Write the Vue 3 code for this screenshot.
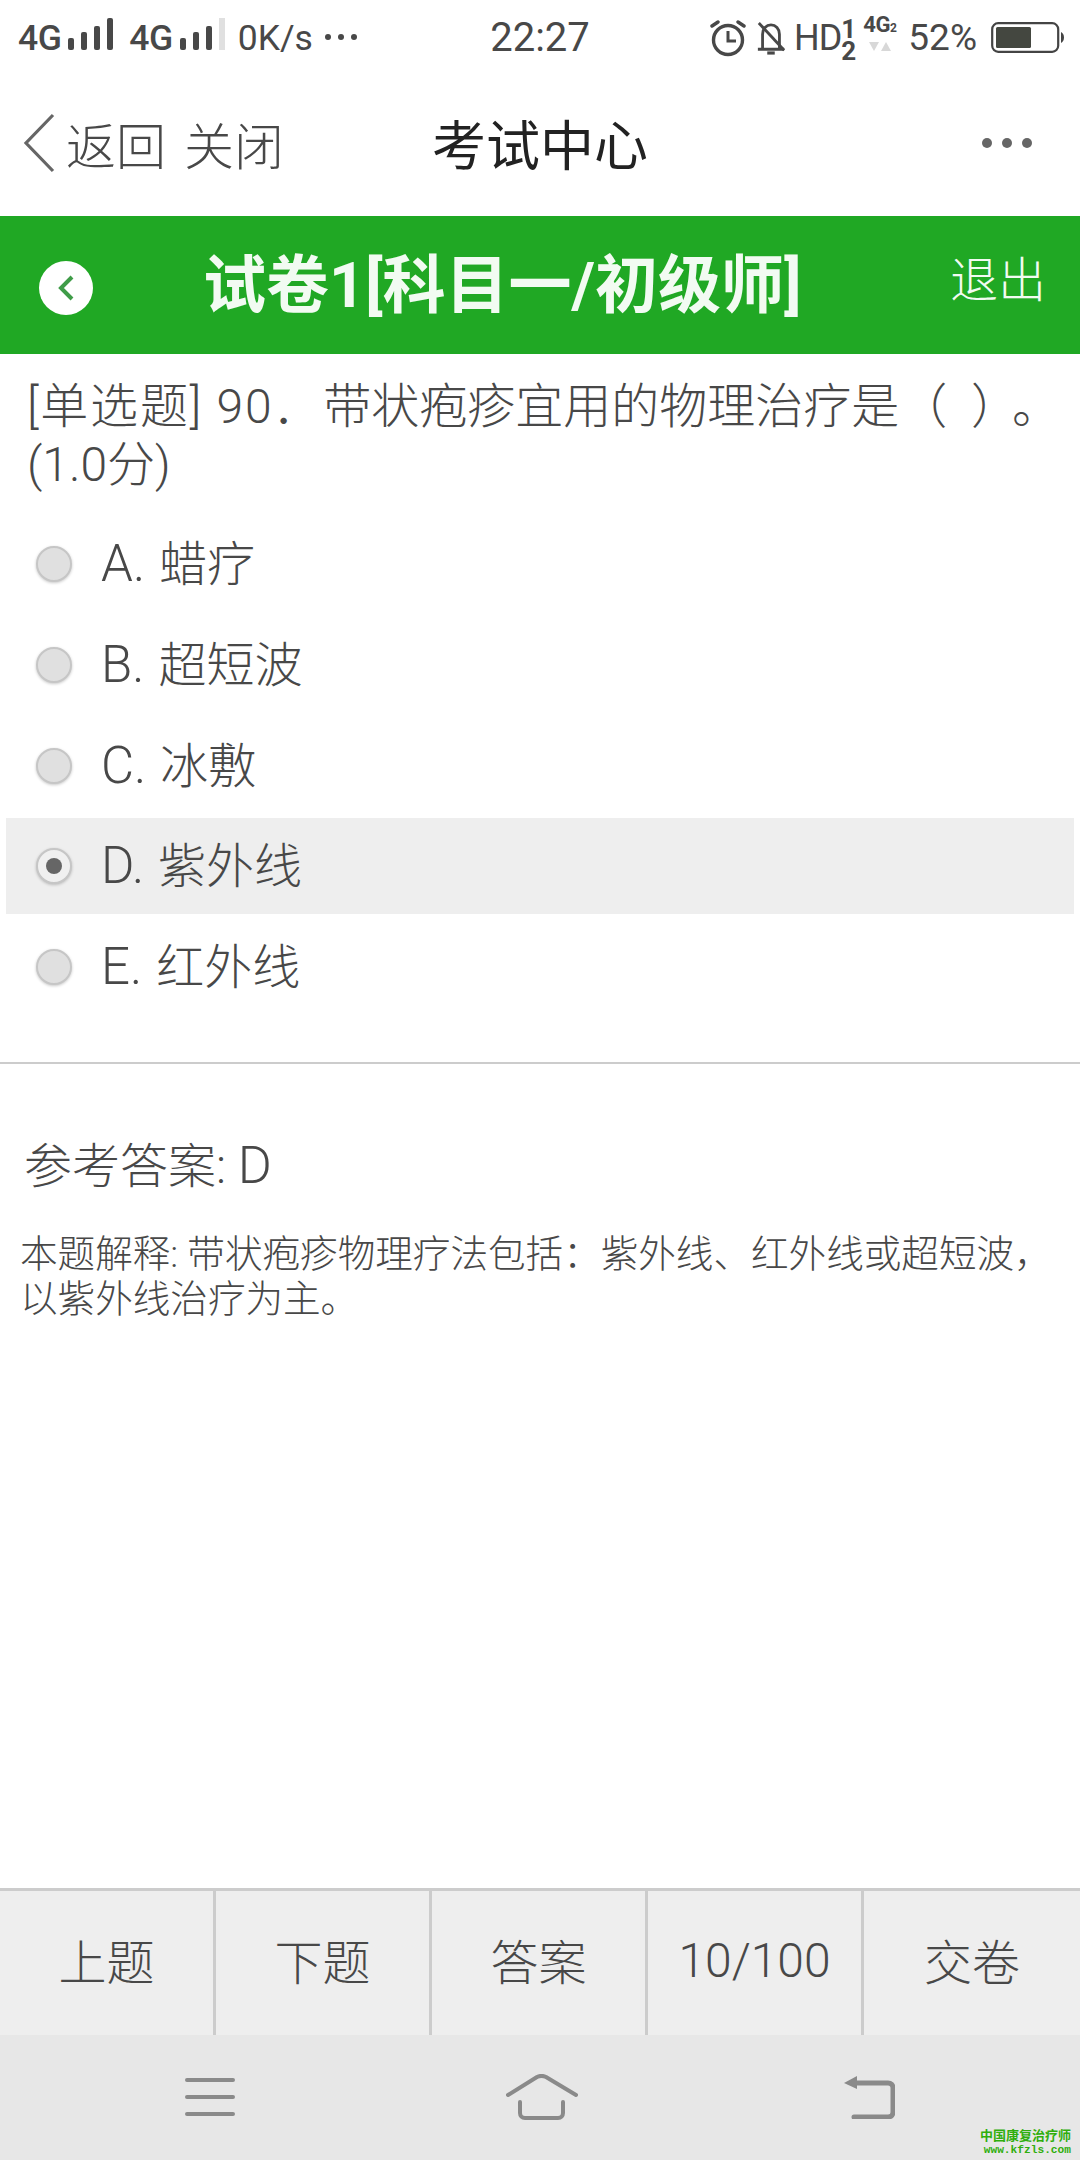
<script setup>
const options = [
  { key: 'A.', text: '蜡疗', selected: false },
  { key: 'B.', text: '超短波', selected: false },
  { key: 'C.', text: '冰敷', selected: false },
  { key: 'D.', text: '紫外线', selected: true },
  { key: 'E.', text: '红外线', selected: false }
]
const tabs = ['上题', '下题', '答案', '10/100', '交卷']
</script>

<template>
  <div class="page">
    <div class="status">
      <div class="st-left">
        <span class="net">4G</span>
        <svg class="sig" width="50" height="34" viewBox="0 0 50 34" fill="#484848">
          <rect x="2" y="21" width="6" height="12" rx="2"/><rect x="15" y="15" width="6" height="18" rx="2"/><rect x="28" y="9" width="6" height="24" rx="2"/><rect x="41" y="1" width="6" height="32" rx="2"/>
        </svg>
        <span class="net net2">4G</span>
        <svg class="sig" width="50" height="34" viewBox="0 0 50 34" fill="#484848">
          <rect x="2" y="21" width="6" height="12" rx="2"/><rect x="15" y="15" width="6" height="18" rx="2"/><rect x="28" y="9" width="6" height="24" rx="2"/><rect x="41" y="1" width="6" height="32" fill="#e0e0e0"/>
        </svg>
        <span class="speed">0K/s</span>
        <span class="dots3"><i></i><i></i><i></i></span>
      </div>
      <div class="st-time">22:27</div>
      <div class="st-right">
        <svg width="36" height="38" viewBox="0 0 36 38" fill="none" stroke="#484848" stroke-width="3.4">
          <circle cx="18" cy="21" r="14.5"/><path d="M18 12v10h8" stroke-width="3"/><path d="M2 7l6-4M34 7l-6-4" stroke-linecap="round"/>
        </svg>
        <svg class="bell" width="30" height="38" viewBox="0 0 32 38" fill="none" stroke="#484848" stroke-width="3">
          <path d="M7 30V15c0-6 4-10 9-10s9 4 9 10v15M2 31h28"/><path d="M12 35h8" stroke-width="3.4"/><path d="M3 3l27 29"/>
        </svg>
        <span class="hd">HD</span>
        <span class="hd-sub"><b>1</b><b>2</b></span>
        <span class="g4">
          <span class="g4-t">4G<small>2</small></span>
          <span class="tri"><i class="down"></i><i class="up"></i></span>
        </span>
        <span class="pct">52%</span>
        <svg class="batt" width="74" height="32" viewBox="0 0 74 32">
          <rect x="1.200" y="1.200" width="66" height="28.600" rx="6" fill="none" stroke="#444" stroke-width="2.200"/>
          <rect x="5" y="5" width="35" height="21" rx="1.500" fill="#444740"/>
          <path d="M70 10c2 1 3 3 3 5.500s-1 4.500-3 5.500z" fill="#444"/>
        </svg>
      </div>
    </div>

    <div class="nav">
      <div class="nav-left">
        <svg width="34" height="60" viewBox="0 0 34 60" fill="none" stroke="#666" stroke-width="3.2">
          <path d="M31 2L4 30l27 28"/>
        </svg>
        <span>返回</span>
        <span class="nav-close">关闭</span>
      </div>
      <div class="nav-title">考试中心</div>
      <div class="nav-more"><i></i><i></i><i></i></div>
    </div>

    <div class="head">
      <div class="back-btn">
        <svg width="20" height="28" viewBox="0 0 20 28" fill="none" stroke="#3f9c48" stroke-width="4">
          <path d="M16 3L5 14l11 11"/>
        </svg>
      </div>
      <div class="head-title">试卷1[科目一/初级师]</div>
      <div class="head-exit">退出</div>
    </div>

    <div class="main">
      <div class="question">
        <div class="q-line"><span class="q-tag">[单选题] 90．</span>带状疱疹宜用的物理治疗是<span class="q-paren">（ ）</span><span class="q-end">。</span></div>
        <div class="q-line">(1.0分)</div>
      </div>
      <div class="options">
        <div v-for="o in options" :key="o.key" class="opt" :class="{ on: o.selected }">
          <span class="radio"><i v-if="o.selected"></i></span>
          <span class="opt-label"><span class="opt-key">{{ o.key }}</span>{{ o.text }}</span>
        </div>
      </div>
      <div class="rule"></div>
      <div class="answer">参考答案: <span class="answer-key">D</span></div>
      <div class="explain">本题解释: 带状疱疹物理疗法包括：紫外线、红外线或超短波，以紫外线治疗为主。</div>
    </div>

    <div class="tabs">
      <div v-for="t in tabs" :key="t" class="tab" :class="{ num: t.includes('/') }">{{ t }}</div>
    </div>

    <div class="sys">
      <svg width="50" height="40" viewBox="0 0 50 40" stroke="#8a8a8a" stroke-width="4" stroke-linecap="round">
        <path d="M2 3h46M2 20h46M2 37h46"/>
      </svg>
      <svg class="sys-home" width="72" height="46" viewBox="0 0 72 46" fill="none" stroke="#8a8a8a" stroke-width="4" stroke-linecap="round" stroke-linejoin="round">
        <path d="M2 21L31 3c3-1.500 6-1.500 9 0l30 18"/>
        <path d="M14 28v11c0 3 2 5 5 5h33c3 0 5-2 5-5V28"/>
      </svg>
      <svg width="52" height="44" viewBox="0 0 52 44" fill="none">
        <path d="M1 8L14 1v13z" fill="#8a8a8a"/>
        <path d="M10 8h35c3 0 5 2 5 5v24c0 3-2 5-5 5H11" stroke="#8a8a8a" stroke-width="5" stroke-linecap="round"/>
      </svg>
    </div>

    <div class="mark">
      <div>中国康复治疗师</div>
      <div class="mark-url">www.kfzls.com</div>
    </div>
  </div>
</template>

<style>
html, body { margin: 0; background: #fff; }
</style>

<style scoped>
.page {
  position: relative;
  width: 1080px;
  height: 2160px;
  display: flex;
  flex-direction: column;
  overflow: hidden;
  background: #fff;
  color: #484848;
  font-family: Roboto, "Noto Sans CJK SC", sans-serif;
}
.status {
  height: 72px;
  display: grid;
  grid-template-columns: 1fr auto 1fr;
  align-items: center;
  padding-top: 3px;
  box-sizing: border-box;
}
.st-left { display: flex; align-items: center; padding-left: 18px; }
.net { font-size: 35.500px; font-weight: 500; letter-spacing: -0.5px; }
.net2 { margin-left: 13px; }
.sig { margin-left: 5px; margin-top: -8px; }
.speed { font-size: 35.500px; margin-left: 10px; }
.dots3 { display: flex; gap: 7px; margin-left: 12px; margin-top: -2px; }
.dots3 i { width: 6px; height: 6px; border-radius: 50%; background: #484848; }
.st-time { font-size: 40px; text-align: center; }
.st-right { display: flex; align-items: center; justify-content: flex-end; padding-right: 15px; }
.bell { margin-left: 10px; }
.hd { font-size: 36px; margin-left: 8px; letter-spacing: -1px; }
.hd-sub { display: flex; flex-direction: column; font-size: 26px; line-height: 22px; margin-top: 5px; }
.hd-sub b { font-weight: 700; display: block; }
.g4 { display: flex; flex-direction: column; align-items: center; margin-left: 7px; margin-top: -10px; }
.g4-t { font-size: 22px; font-weight: 700; line-height: 22px; letter-spacing: -0.5px; }
.g4-t small { font-size: 12px; }
.tri { display: flex; gap: 2px; margin-top: 3px; }
.tri i { width: 0; height: 0; border-left: 5px solid transparent; border-right: 5px solid transparent; }
.tri .down { border-top: 9px solid #d8d8d8; }
.tri .up { border-bottom: 9px solid #d8d8d8; }
.pct { font-size: 37px; margin-left: 12px; margin-right: 14px; }

.nav {
  height: 144px;
  display: grid;
  grid-template-columns: 1fr auto 1fr;
  align-items: center;
  padding-bottom: 3px;
  box-sizing: border-box;
}
.nav-left { display: flex; align-items: center; padding-left: 22px; gap: 10px; font-size: 50px; font-weight: 300; color: #484848; }
.nav-close { margin-left: 8px; }
.nav-title { font-size: 54px; font-weight: 400; color: #222; }
.nav-more { display: flex; justify-content: flex-end; gap: 10px; padding-right: 48px; }
.nav-more i { width: 10px; height: 10px; border-radius: 50%; background: #666; }

.head {
  height: 138px;
  background: #20a824;
  display: flex;
  align-items: center;
  color: #f2fbf2;
}
.back-btn {
  width: 54px;
  height: 54px;
  margin-left: 39px;
  margin-top: 6px;
  border-radius: 50%;
  background: #fff;
  display: flex;
  align-items: center;
  justify-content: center;
}
.head-title { margin-left: 110px; font-size: 63px; font-weight: 700; margin-top: -12px; white-space: nowrap; }
.head-exit { margin-left: auto; margin-right: 34px; font-size: 48px; font-weight: 300; margin-top: -19px; }

.main { flex: 1; min-height: 0; }
.question {
  padding: 24px 0 0 27px;
  font-size: 48px;
  line-height: 58px;
  font-weight: 300;
  color: #484848;
}
.q-line { white-space: nowrap; }
.q-tag { letter-spacing: 1.800px; }
.q-paren { letter-spacing: 6px; }
.q-end { margin-left: 11px; }
.options { margin-top: 19px; padding: 0 6px; }
.opt {
  height: 101px;
  display: flex;
  align-items: center;
  font-size: 48px;
  font-weight: 300;
  padding-left: 30px;
}
.opt.on { background: #eee; height: 96px; margin: 2px 0 2px; }
.opt-label { margin-top: -8px; }
.opt-key { font-size: 51px; margin-right: 14px; }
.radio {
  width: 36px;
  height: 36px;
  border-radius: 50%;
  background: #e0e0e0;
  border: 2px solid #c6c6c6;
  box-sizing: border-box;
  box-shadow: 0 1px 3px rgba(0,0,0,.22);
  margin-right: 29px;
  display: flex;
  align-items: center;
  justify-content: center;
}
.radio i { width: 16px; height: 16px; border-radius: 50%; background: #666; }
.on .radio { background: #f0f0f0; }
.rule { height: 2px; background: #ccc; margin-top: 45px; }
.answer { padding: 72px 0 0 24px; font-size: 48px; line-height: 60px; font-weight: 300; }
.answer-key { font-size: 52px; }
.explain { padding: 35px 20px 0 20px; font-size: 37.600px; line-height: 45px; font-weight: 300; }

.tabs {
  height: 144px;
  display: grid;
  grid-template-columns: repeat(5, 1fr);
  background: #eee;
  border-top: 3px solid #ccc;
}
.tab {
  display: flex;
  align-items: center;
  justify-content: center;
  font-size: 48px;
  font-weight: 300;
  border-right: 3px solid #ccc;
  padding-bottom: 9px;
}
.tab.num { padding-bottom: 5px; }
.tab:last-child { border-right: 0; }

.sys {
  height: 125px;
  background: #e7e7e7;
  display: flex;
  justify-content: center;
  align-items: center;
  gap: 268px;
  padding-bottom: 2px;
  box-sizing: border-box;
}
.sys-home { margin: 0 -3px 0 3px; }
.mark {
  position: absolute;
  right: 9px;
  bottom: 3px;
  color: #2fae0c;
  font-size: 13px;
  font-weight: 700;
  line-height: 14px;
  text-align: right;
}
.mark-url { font-family: "Liberation Mono", monospace; font-size: 11.200px; }
</style>
